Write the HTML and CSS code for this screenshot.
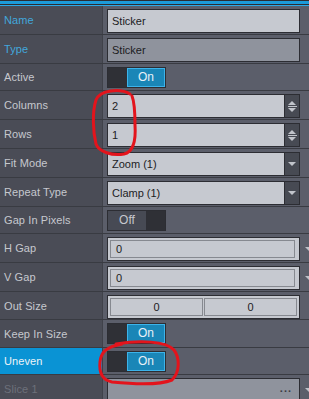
FILE: index.html
```html
<!DOCTYPE html>
<html lang="en">
<head>
  <meta charset="UTF-8">
  <title>Inspector</title>
  <link rel="stylesheet" href="styles.css">
</head>
<body>
  <div class="panel">
    <div class="topbar"></div>

    <div class="row">
      <div class="label key">Name</div>
      <div class="value"><div class="field">Sticker</div><div class="edge"></div></div>
    </div>
    <div class="row">
      <div class="label key">Type</div>
      <div class="value"><div class="field disabled">Sticker</div><div class="edge"></div></div>
    </div>
    <div class="row short">
      <div class="label">Active</div>
      <div class="value"><div class="toggle on"><span class="knob"></span><span class="state">On</span></div></div>
    </div>
    <div class="row">
      <div class="label">Columns</div>
      <div class="value">
        <div class="field combo"><span class="text">2</span>
          <span class="btn"><span class="up"></span><span class="bar"></span><span class="down"></span></span>
        </div><div class="edge"></div>
      </div>
    </div>
    <div class="row">
      <div class="label">Rows</div>
      <div class="value">
        <div class="field combo"><span class="text">1</span>
          <span class="btn"><span class="up"></span><span class="bar"></span><span class="down"></span></span>
        </div><div class="edge"></div>
      </div>
    </div>
    <div class="row">
      <div class="label">Fit Mode</div>
      <div class="value">
        <div class="field combo"><span class="text">Zoom (1)</span><span class="btn"><span class="down"></span></span></div><div class="edge"></div>
      </div>
    </div>
    <div class="row">
      <div class="label">Repeat Type</div>
      <div class="value">
        <div class="field combo"><span class="text">Clamp (1)</span><span class="btn"><span class="down"></span></span></div><div class="edge"></div>
      </div>
    </div>
    <div class="row short">
      <div class="label">Gap In Pixels</div>
      <div class="value"><div class="toggle off"><span class="state">Off</span><span class="knob"></span></div></div>
    </div>
    <div class="row">
      <div class="label">H Gap</div>
      <div class="value"><div class="field boxed"><span class="inner">0</span></div><div class="edge"><span class="cut"></span></div></div>
    </div>
    <div class="row">
      <div class="label">V Gap</div>
      <div class="value"><div class="field boxed"><span class="inner">0</span></div><div class="edge"><span class="cut"></span></div></div>
    </div>
    <div class="row mid">
      <div class="label">Out Size</div>
      <div class="value">
        <div class="pair"><span class="cell">0</span><span class="cell">0</span></div><div class="edge"></div>
      </div>
    </div>
    <div class="row mid">
      <div class="label">Keep In Size</div>
      <div class="value"><div class="toggle on"><span class="knob"></span><span class="state">On</span></div></div>
    </div>
    <div class="row short selected">
      <div class="label">Uneven</div>
      <div class="value"><div class="toggle on"><span class="knob"></span><span class="state">On</span></div></div>
    </div>
    <div class="row">
      <div class="label dim">Slice 1</div>
      <div class="value"><div class="field disabled dots"><span class="text"></span><span class="more">...</span></div><div class="edge"><span class="cut"></span></div></div>
    </div>

    <svg class="mark" width="309" height="399" viewBox="0 0 309 399">
      <path d="M130 94 C120 88 100 90 96 100 C92 112 93 132 96 144 C99 152 112 156 124 154 C133 152 136 140 135 125 C135 112 134 101 132 96"
            fill="none" stroke="#e3141c" stroke-width="3" stroke-linecap="round"/>
      <path d="M116 344 C140 340 166 341 174 350 C180 358 180 372 172 380 C160 385 132 384 112 382 C102 380 99 372 100 362 C101 352 106 347 122 344"
            fill="none" stroke="#e3141c" stroke-width="3" stroke-linecap="round"/>
    </svg>
  </div>
</body>
</html>
```

FILE: styles.css
```css
body {
  margin: 0;
  background: #5b5e6a;
  font-family: "Liberation Sans", Arial, sans-serif;
  font-size: 11px;
}
.panel {
  position: relative;
  width: 309px;
  height: 399px;
  overflow: hidden;
}
.topbar {
  height: 6px;
  background: linear-gradient(to bottom, #2b2d33 0, #2b2d33 1px, #1d9bd9 1px, #1d9bd9 4px, #2b2d33 4px, #2b2d33 5px, #2ba9e8 5px);
}
.row {
  display: grid;
  grid-template-columns: 103px 1fr;
  height: 29px;
  border-bottom: 1px solid #393b42;
  box-sizing: border-box;
}
.row.short {
  height: 27px;
}
.row.mid {
  height: 28px;
}
.label {
  background: #4a4c56;
  border-right: 1px solid #40424a;
  color: #c6c8ce;
  padding-left: 4px;
  display: flex;
  align-items: center;
  letter-spacing: 0.1px;
}
.label.key {
  color: #42a7dc;
}
.label.dim {
  color: #6d707a;
}
.selected .label {
  background: #0a93d4;
  color: #eef4f8;
}
.value {
  display: flex;
  align-items: flex-start;
  padding: 3px 0 0 4px;
}
.field {
  flex: 1;
  height: 24px;
  box-sizing: border-box;
  background: #c6c9d0;
  border: 1px solid #2c2d33;
  color: #1c1c1f;
  line-height: 22px;
  padding-left: 4px;
}
.field.disabled {
  background: #8f939d;
}
.edge {
  width: 9px;
  flex: none;
  position: relative;
  height: 24px;
}
.cut {
  position: absolute;
  left: 5px;
  top: 10px;
  border-left: 4px solid transparent;
  border-right: 4px solid transparent;
  border-top: 4px solid #bfc2c9;
}
.combo {
  display: flex;
  padding-left: 0;
}
.combo .text {
  flex: 1;
  padding-left: 4px;
}
.btn {
  width: 14px;
  background: #474a53;
  border-left: 1px solid #2c2d33;
  display: flex;
  flex-direction: column;
  align-items: center;
  justify-content: center;
}
.up {
  border-left: 4px solid transparent;
  border-right: 4px solid transparent;
  border-bottom: 4px solid #c1c4cb;
}
.down {
  border-left: 4px solid transparent;
  border-right: 4px solid transparent;
  border-top: 4px solid #c1c4cb;
}
.bar {
  width: 9px;
  height: 1px;
  background: #c1c4cb;
  margin: 1px 0;
}
.boxed {
  padding: 2px 4px 2px 2px;
  line-height: normal;
}
.boxed .inner {
  display: block;
  height: 18px;
  box-sizing: border-box;
  border: 1px solid #868990;
  padding-left: 5px;
  line-height: 16px;
}
.pair {
  flex: 1;
  display: flex;
  height: 24px;
  box-sizing: border-box;
  background: #c6c9d0;
  border: 1px solid #2c2d33;
  padding: 2px;
  gap: 1px;
}
.cell {
  flex: 1;
  border: 1px solid #868990;
  text-align: center;
  line-height: 16px;
  color: #1c1c1f;
}
.toggle {
  display: flex;
  width: 59px;
  height: 21px;
  box-sizing: border-box;
  border: 1px solid #2c2d33;
}
.knob {
  width: 19px;
  background: #2f3036;
}
.state {
  flex: 1;
  text-align: center;
  line-height: 19px;
  font-size: 12px;
}
.on .state {
  background: #1a86b7;
  color: #e7f1f7;
  outline: 1px solid #3cb3ea;
  outline-offset: -1px;
}
.off .state {
  background: #474a54;
  color: #c6c8ce;
}
.dots {
  display: flex;
  padding-left: 0;
}
.dots .text {
  flex: 1;
}
.more {
  color: #3a3c44;
  padding-right: 7px;
  font-weight: bold;
  letter-spacing: 1px;
  line-height: 18px;
}
.mark {
  position: absolute;
  left: 0;
  top: 0;
  pointer-events: none;
}
```
